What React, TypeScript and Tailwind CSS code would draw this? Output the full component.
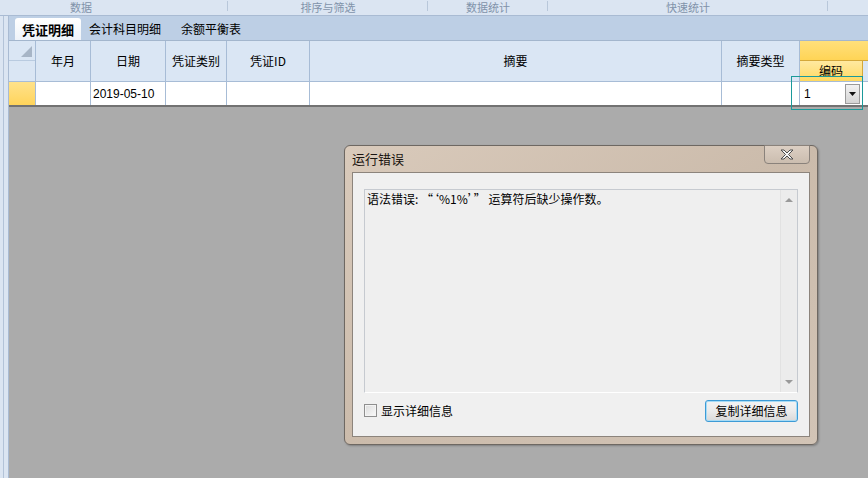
import React from "react";

const cjk = "font-['Noto_Sans_CJK_SC','Noto_Sans',sans-serif]";

const ribbonGroups = [
  { label: "数据", width: "w-[228px]", pad: "pl-[70px] text-left" },
  { label: "排序与筛选", width: "w-[200px]", pad: "text-center" },
  { label: "数据统计", width: "w-[120px]", pad: "text-center" },
  { label: "快速统计", width: "w-[280px]", pad: "text-center" },
];

const columns = [
  { label: "年月", width: "w-[55px]" },
  { label: "日期", width: "w-[75px]", value: "2019-05-10" },
  { label: "凭证类别", width: "w-[61px]" },
  { label: "凭证ID", width: "w-[83px]" },
  { label: "摘要", width: "w-[412px]" },
  { label: "摘要类型", width: "w-[78px]" },
];

const tabs = ["凭证明细", "会计科目明细", "余额平衡表"];

export default function App() {
  return (
    <div className={`relative w-[868px] h-[478px] overflow-hidden bg-[#ababab] flex flex-col ${cjk} text-[12px] text-black`}>
      {/* ribbon group captions */}
      <div className="h-[16px] shrink-0 flex bg-[#dbe5f2] border-b border-[#a9bbd3] text-[#8193aa] text-[11px] leading-[15px]">
        {ribbonGroups.map((g) => (
          <div key={g.label} className={`${g.width} ${g.pad} relative`}>
            <span>{g.label}</span>
            <span className="absolute right-0 top-[1px] h-[10px] w-px bg-[#b8c7da]" />
          </div>
        ))}
        <div className="flex-1" />
      </div>

      <div className="flex-1 flex">
        {/* left strip */}
        <div className="w-[9px] shrink-0 flex bg-[#dbe5f2]">
          <div className="w-[4px] border-r border-[#b3c3d8]" />
          <div className="flex-1 border-r border-[#a9bbd3]" />
        </div>

        <div className="flex-1 flex flex-col">
          {/* tabs */}
          <div className="h-[25px] shrink-0 flex items-end pl-[6px] bg-[#bdcfe5] border-b border-[#a3b6cd]">
            {tabs.map((t, i) =>
              i === 0 ? (
                <div key={t} className="h-[22px] px-[7px] flex items-center rounded-t-[3px] bg-gradient-to-b from-white to-[#eef3f9] font-bold text-[13px] leading-none">
                  {t}
                </div>
              ) : (
                <div key={t} className={`h-[22px] px-[10px] flex items-center text-[12px] leading-none ${i === 1 ? "-ml-[2px]" : ""}`}>
                  {t}
                </div>
              )
            )}
          </div>

          {/* grid header */}
          <div className="h-[41px] shrink-0 flex bg-[#dae6f4] border-b border-[#a7bcd6]">
            <div className="w-[27px] shrink-0 flex flex-col border-r border-[#a7bcd6]">
              <div className="h-[20px] border-b border-[#b9cbe0] relative">
                <svg className="absolute right-[3px] bottom-[3px]" width="11" height="11" viewBox="0 0 11 11">
                  <polygon points="11,0 11,11 0,11" fill="#a7b5c6" />
                </svg>
              </div>
              <div className="flex-1" />
            </div>
            {columns.map((c) => (
              <div key={c.label} className={`${c.width} shrink-0 flex items-center justify-center border-r border-[#a7bcd6] leading-none`}>
                {c.label}
              </div>
            ))}
            <div className="flex-1 flex flex-col">
              <div className="h-[20px] bg-gradient-to-b from-[#ffe07a] to-[#ffd455] border-b border-[#d4a83a]" />
              <div className="flex-1 flex">
                <div className="w-[63px] flex items-center justify-center bg-gradient-to-b from-[#ffe9a0] to-[#ffd95e] border-r border-[#d4a83a] leading-none">
                  编码
                </div>
                <div className="flex-1" />
              </div>
            </div>
          </div>

          {/* data row */}
          <div className="h-[25px] shrink-0 flex bg-white border-b-2 border-[#727272]">
            <div className="w-[27px] shrink-0 bg-gradient-to-b from-[#ffe28a] to-[#ffd45a] border-r border-[#a7bcd6]" />
            {columns.map((c) => (
              <div key={c.label} className={`${c.width} shrink-0 flex items-center pl-[2px] border-r border-[#a7bcd6] font-['Liberation_Sans',sans-serif] text-[12px] leading-none`}>
                {c.value ?? ""}
              </div>
            ))}
            <div className="flex-1 flex items-center">
              <div className="w-[63px] h-full flex items-center justify-between pl-[4px] pr-[3px]">
                <span className="font-['Liberation_Sans',sans-serif] leading-none">1</span>
                <div className="w-[15px] h-[20px] flex items-center justify-center border border-[#9a9a9a] bg-gradient-to-b from-[#f2f2f2] to-[#d4d4d4]">
                  <svg width="7" height="4" viewBox="0 0 7 4">
                    <polygon points="0,0 7,0 3.5,4" fill="#111" />
                  </svg>
                </div>
              </div>
            </div>
          </div>
          <div className="flex-1" />
        </div>
      </div>

      {/* focus rectangle on current cell */}
      <div className="absolute left-[791px] top-[76px] w-[72px] h-[34px] border border-[#1b9a9a]" />

      {/* error dialog */}
      <div className="absolute left-[344px] top-[145px] w-[474px] h-[300px] rounded-[6px] border border-[#6e6862] bg-gradient-to-br from-[#d9cabb] via-[#cbbbab] to-[#d2c4b6] flex flex-col shadow-[1px_1px_2px_rgba(0,0,0,0.25)]">
        <div className="h-[26px] shrink-0 flex items-start justify-between pl-[7px] pr-[7px]">
          <span className="mt-[6px] text-[13px] leading-none text-[#1a1410]">运行错误</span>
          <div className="w-[46px] h-[19px] -mt-px flex items-center justify-center rounded-b-[4px] border border-[#8a827b] bg-gradient-to-b from-[#dccfc3] to-[#cbbdaf]">
            <svg width="14" height="11" viewBox="0 0 14 11">
              <path d="M1,1 L4,1 L7,4 L10,1 L13,1 L8.5,5.5 L13,10 L10,10 L7,7 L4,10 L1,10 L5.5,5.5 Z" fill="#f7f7f7" stroke="#4d4d4d" strokeWidth="1" strokeLinejoin="round" />
            </svg>
          </div>
        </div>
        <div className="flex-1 mx-[7px] mb-[7px] border border-[#8c847c] bg-[#f0f0f0] flex flex-col px-[11px] pt-[16px] pb-[10px]">
          <div className="h-[204px] flex border border-[#c6cad0] border-b-white bg-[#efefef]">
            <div className="flex-1 pl-[2px] pt-[2px] leading-[14px]">
              语法错误: “‘%1%’” 运算符后缺少操作数。
            </div>
            <div className="w-[17px] flex flex-col justify-between items-center py-[8px] border-l border-[#e2e2e2] bg-[#ececec]">
              <svg width="8" height="4" viewBox="0 0 8 4"><polygon points="4,0 8,4 0,4" fill="#9a9a9a" /></svg>
              <svg width="8" height="4" viewBox="0 0 8 4"><polygon points="0,0 8,0 4,4" fill="#9a9a9a" /></svg>
            </div>
          </div>
          <div className="flex-1 flex items-center justify-between pt-[2px]">
            <label className="flex items-center gap-[4px] leading-none">
              <span className="w-[13px] h-[13px] border border-[#8f8f8f] bg-gradient-to-br from-[#dcdcdc] to-[#fafafa] shadow-[inset_0_0_0_1px_#f4f4f4]" />
              显示详细信息
            </label>
            <button className="w-[93px] h-[22px] rounded-[3px] border border-[#3d9bd6] bg-gradient-to-b from-[#f3f3f3] via-[#ebebeb] to-[#d9d9d9] shadow-[inset_0_0_0_1px_#a7dbf5] leading-none">
              复制详细信息
            </button>
          </div>
        </div>
      </div>
    </div>
  );
}
